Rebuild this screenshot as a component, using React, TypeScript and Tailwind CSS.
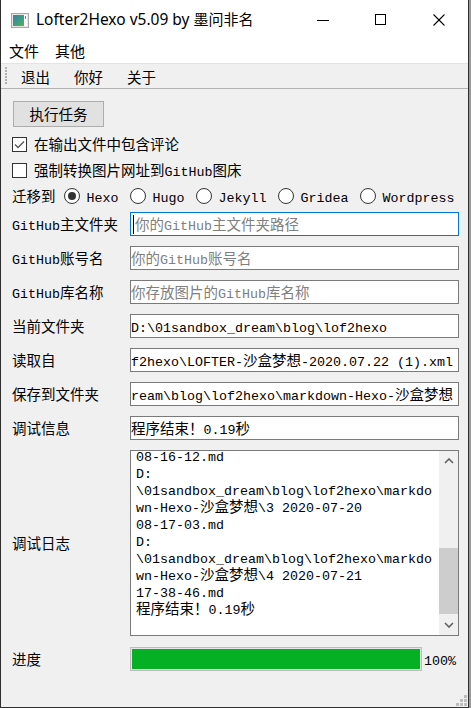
import React from 'react';

const CJK = /[\u2E80-\u9FFF\uFF00-\uFFEF\u3000-\u303F]/;

function runs(s: string) {
  const out: { c: boolean; t: string }[] = [];
  for (const ch of s) {
    const c = CJK.test(ch);
    const last = out[out.length - 1];
    if (last && last.c === c) last.t += ch;
    else out.push({ c, t: ch });
  }
  return out;
}

function Mx({ s, tight }: { s: string; tight?: boolean }) {
  return (
    <span className={tight ? 'whitespace-pre leading-[14px]' : 'whitespace-pre'}>
      {runs(s).map((r, i) =>
        r.c ? (
          <span key={i} className="font-['Noto_Sans_CJK_SC',sans-serif] text-[14.5px]">
            {r.t}
          </span>
        ) : (
          <span key={i} className="font-['Liberation_Mono',monospace] text-[13.33px]">
            {r.t}
          </span>
        )
      )}
    </span>
  );
}

function AppIcon() {
  return (
    <svg width="18" height="15" viewBox="0 0 18 15">
      <defs>
        <linearGradient id="ig" x1="0" y1="0" x2="1" y2="1">
          <stop offset="0" stopColor="#3f7fa8" />
          <stop offset="0.5" stopColor="#3f9a86" />
          <stop offset="1" stopColor="#58b34e" />
        </linearGradient>
      </defs>
      <rect x="0.5" y="0.5" width="17" height="14" fill="#e8e8e8" stroke="#a8a8a8" />
      <rect x="2" y="2" width="11" height="11" fill="url(#ig)" />
      <rect x="13" y="2" width="3" height="11" fill="#ffffff" />
      <rect x="14" y="3" width="1" height="3" fill="#3f9a9a" />
    </svg>
  );
}

function Label({ s }: { s: string }) {
  return (
    <div className="w-[118px] shrink-0 flex items-center whitespace-nowrap text-black">
      <Mx s={s} />
    </div>
  );
}

function Field({ label, value, placeholder, focused }: { label: string; value?: string; placeholder?: string; focused?: boolean }) {
  return (
    <div className="flex items-center h-[24px]">
      <Label s={label} />
      <div
        className={
          focused
            ? 'flex-1 h-[24px] bg-white border border-[#0078d7] flex items-center overflow-hidden whitespace-nowrap pl-[1px]'
            : 'flex-1 h-[24px] bg-white border border-[#7a7a7a] flex items-center overflow-hidden whitespace-nowrap'
        }
      >
        {focused && <span className="w-[1px] h-[19px] bg-black ml-[1px] mr-[1px] shrink-0" />}
        {placeholder ? (
          <span className="text-[#808080]">
            <Mx s={placeholder} />
          </span>
        ) : (
          <span className="text-black">
            <Mx s={value || ''} />
          </span>
        )}
      </div>
    </div>
  );
}

function Radio({ label, checked }: { label: string; checked?: boolean }) {
  return (
    <div className="flex items-center">
      <div className="w-[16px] h-[16px] rounded-full border border-[#333333] bg-white flex items-center justify-center shrink-0">
        {checked && <div className="w-[8px] h-[8px] rounded-full bg-[#333333]" />}
      </div>
      <span className="ml-[7px] text-black">
        <Mx s={label} />
      </span>
    </div>
  );
}

function Chevron({ up }: { up?: boolean }) {
  return (
    <svg width="10" height="6" viewBox="0 0 10 6">
      <polyline
        points={up ? '1,5 5,1 9,5' : '1,1 5,5 9,1'}
        fill="none"
        stroke="#606060"
        strokeWidth="1.6"
      />
    </svg>
  );
}

const logLines = [
  '08-16-12.md',
  'D:',
  '\\01sandbox_dream\\blog\\lof2hexo\\markdo',
  'wn-Hexo-沙盒梦想\\3 2020-07-20',
  '08-17-03.md',
  'D:',
  '\\01sandbox_dream\\blog\\lof2hexo\\markdo',
  'wn-Hexo-沙盒梦想\\4 2020-07-21',
  '17-38-46.md',
  '程序结束！0.19秒',
];

export default function App() {
  return (
    <div className="w-[471px] h-[708px] bg-[#9a9a9a] flex">
      <div className="w-[469px] h-[708px] border-l border-r border-b border-[#2f2f2f] bg-[#f0f0f0] flex flex-col relative">
        {/* Title bar */}
        <div className="h-[39px] bg-white flex items-center shrink-0">
          <div className="ml-[10px] mt-[1px]">
            <AppIcon />
          </div>
          <div className="ml-[7px] text-[15.5px] text-black whitespace-nowrap font-['Segoe_UI','Noto_Sans',sans-serif]">
            Lofter2Hexo v5.09 by <span className="font-['Noto_Sans_CJK_SC',sans-serif] text-[15px]">墨问非名</span>
          </div>
          <div className="ml-auto flex h-full">
            <div className="w-[58px] h-full flex items-center justify-center">
              <svg width="12" height="12" viewBox="0 0 12 12">
                <line x1="0" y1="6.5" x2="12" y2="6.5" stroke="#000" strokeWidth="1" />
              </svg>
            </div>
            <div className="w-[58px] h-full flex items-center justify-center">
              <svg width="12" height="12" viewBox="0 0 12 12">
                <rect x="0.5" y="0.5" width="10" height="10" fill="none" stroke="#000" strokeWidth="1" />
              </svg>
            </div>
            <div className="w-[58px] h-full flex items-center justify-center">
              <svg width="12" height="12" viewBox="0 0 12 12">
                <line x1="0.5" y1="0.5" x2="11.5" y2="11.5" stroke="#000" strokeWidth="1.1" />
                <line x1="11.5" y1="0.5" x2="0.5" y2="11.5" stroke="#000" strokeWidth="1.1" />
              </svg>
            </div>
          </div>
        </div>

        {/* Menu bar */}
        <div className="h-[24px] bg-white flex items-center shrink-0 font-['Noto_Sans_CJK_SC',sans-serif] text-[15px] text-black">
          <div className="px-[8px]">文件</div>
          <div className="px-[8px]">其他</div>
        </div>

        {/* Toolbar */}
        <div className="h-[26px] border-t border-[#e3e3e3] border-b border-b-[#b4b4b4] flex items-center shrink-0 font-['Noto_Sans_CJK_SC',sans-serif] text-[14.5px] text-black">
          <svg width="2" height="19" viewBox="0 0 2 19" className="ml-[4px] mt-[1px]">
            {[0, 3, 6, 9, 12, 15].map((y) => (
              <rect key={y} x="0" y={y} width="2" height="2" fill="#b0b0b0" />
            ))}
          </svg>
          <div className="ml-[2px] px-[12px] pt-[2px]">退出</div>
          <div className="px-[12px] pt-[2px]">你好</div>
          <div className="px-[12px] pt-[2px]">关于</div>
        </div>

        {/* Body */}
        <div className="flex-1 flex flex-col pl-[11px] pr-[9px] pt-[12px] text-black">
          <div className="w-[91px] h-[26px] bg-[#e1e1e1] border border-[#adadad] flex items-center justify-center font-['Noto_Sans_CJK_SC',sans-serif] text-[14.5px] ml-[1px]">
            执行任务
          </div>

          <div className="mt-[4px] h-[26px] flex items-center">
            <div className="w-[15px] h-[15px] border border-[#333333] bg-white flex items-center justify-center">
              <svg width="11" height="9" viewBox="0 0 11 9">
                <polyline points="1,4.5 4,7.5 10,1.5" fill="none" stroke="#555555" strokeWidth="1.3" />
              </svg>
            </div>
            <span className="ml-[7px]">
              <Mx s="在输出文件中包含评论" />
            </span>
          </div>

          <div className="h-[26px] flex items-center">
            <div className="w-[15px] h-[15px] border border-[#333333] bg-white" />
            <span className="ml-[7px]">
              <Mx s="强制转换图片网址到GitHub图床" />
            </span>
          </div>

          <div className="h-[26px] flex items-center">
            <span>
              <Mx s="迁移到" />
            </span>
            <div className="ml-[8px] flex items-center gap-[11px]">
              <Radio label="Hexo" checked />
              <Radio label="Hugo" />
              <Radio label="Jekyll" />
              <Radio label="Gridea" />
              <Radio label="Wordpress" />
            </div>
          </div>

          <div className="mt-[3px] flex flex-col gap-[10px]">
            <Field label="GitHub主文件夹" placeholder="你的GitHub主文件夹路径" focused />
            <Field label="GitHub账号名" placeholder="你的GitHub账号名" />
            <Field label="GitHub库名称" placeholder="你存放图片的GitHub库名称" />
            <Field label="当前文件夹" value="D:\01sandbox_dream\blog\lof2hexo" />
            <Field label="读取自" value="f2hexo\LOFTER-沙盒梦想-2020.07.22 (1).xml" />
            <Field label="保存到文件夹" value="ream\blog\lof2hexo\markdown-Hexo-沙盒梦想" />
            <Field label="调试信息" value="程序结束！0.19秒" />
          </div>

          <div className="mt-[10px] flex items-center h-[186px]">
            <Label s="调试日志" />
            <div className="flex-1 h-[186px] bg-white border border-[#7a7a7a] flex overflow-hidden">
              <div className="flex-1 overflow-hidden pl-[5px]">
                <div className="mt-[-3px] flex flex-col">
                  {logLines.map((l, i) => (
                    <div key={i} className="h-[17px] leading-[14px] flex items-center whitespace-nowrap">
                      <Mx s={l} tight />
                    </div>
                  ))}
                </div>
              </div>
              <div className="w-[19px] bg-[#f0f0f0] flex flex-col">
                <div className="h-[20px] flex items-center justify-center">
                  <Chevron up />
                </div>
                <div className="flex-1" />
                <div className="h-[66px] bg-[#cdcdcd] mb-[1px]" />
                <div className="h-[20px] flex items-center justify-center">
                  <Chevron />
                </div>
              </div>
            </div>
          </div>

          <div className="mt-[11px] flex items-center h-[24px]">
            <Label s="进度" />
            <div className="w-[292px] h-[24px] border border-[#bcbcbc] bg-[#e6e6e6] p-[1px]">
              <div className="w-full h-full bg-[#06b025]" />
            </div>
            <span className="ml-[2px]">
              <Mx s="100%" />
            </span>
          </div>
        </div>

        {/* Resize grip */}
        <svg width="11" height="11" viewBox="0 0 11 11" className="absolute right-[1px] bottom-[1px]">
          {[
            [8, 0],
            [4, 4],
            [8, 4],
            [0, 8],
            [4, 8],
            [8, 8],
          ].map(([x, y], i) => (
            <rect key={i} x={x} y={y} width="3" height="3" fill="#bdbdbd" />
          ))}
        </svg>
      </div>
    </div>
  );
}
